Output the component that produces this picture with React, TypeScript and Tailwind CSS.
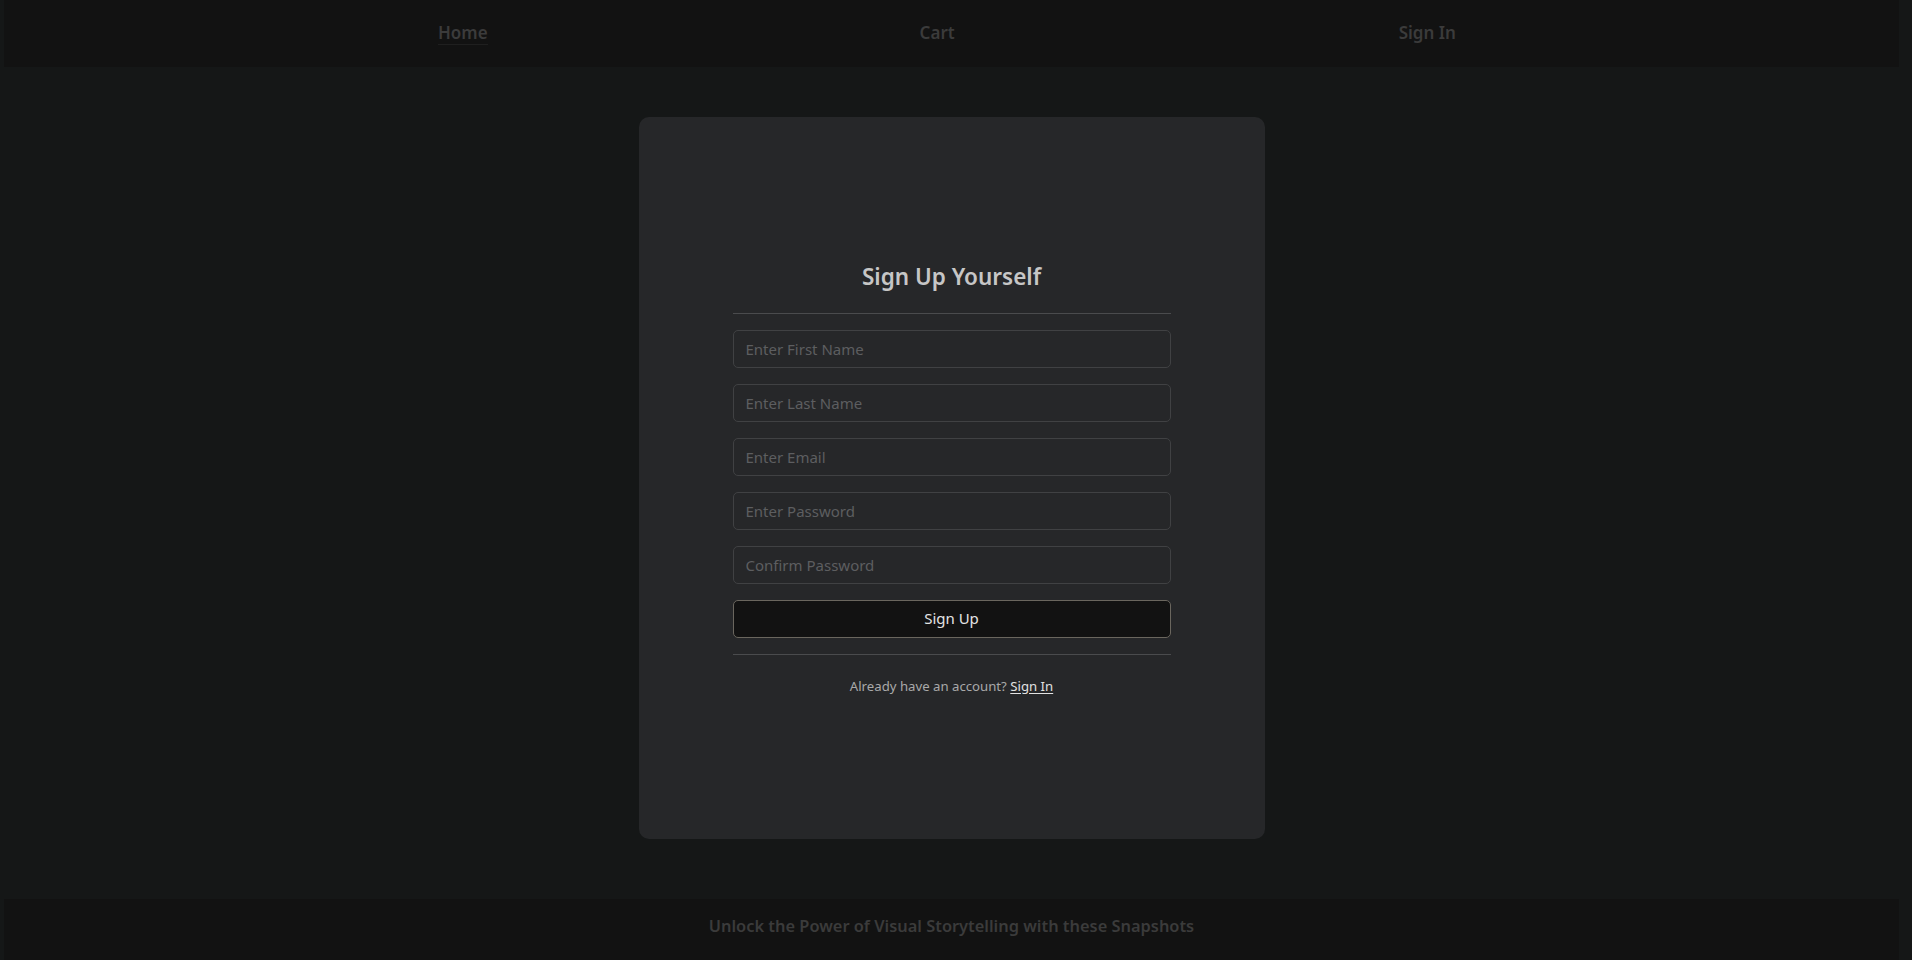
import React from "react";

export default function App() {
  const font = { fontFamily: '"Noto Sans", "Open Sans", sans-serif' };
  const inputs = [
    "Enter First Name",
    "Enter Last Name",
    "Enter Email",
    "Enter Password",
    "Confirm Password",
  ];
  return (
    <div className="h-[960px] w-full bg-[#151717] overflow-hidden" style={font}>
      <div className="ml-[4px] w-[1895px] flex flex-col h-[960px]">
        <nav className="h-[67px] shrink-0 bg-[#121212] flex items-center">
          <div className="flex items-center pb-[1px] text-[17px] font-semibold text-[#3b3b3b] whitespace-nowrap">
            <a className="ml-[434px] border-b border-[#1f1f1f] leading-[22px]">Home</a>
            <a className="ml-[432px] border-b border-transparent leading-[22px]">Cart</a>
            <a className="ml-[444px] border-b border-transparent leading-[22px]">Sign In</a>
          </div>
        </nav>
        <main className="flex-1 flex justify-center pt-[50px] pb-[60px]">
          <div className="w-[626px] h-[722px] rounded-[10px] bg-[#262729] flex flex-col items-center justify-center">
            <div className="w-[438px] flex flex-col pb-[2px]">
              <h1 className="pt-[3px] text-center text-[22.5px] leading-[30px] font-semibold text-[#c6c6c6]">
                Sign Up Yourself
              </h1>
              <div className="mt-[21px] h-px bg-[#4a4b4d]" />
              <div className="mt-[16px] flex flex-col gap-[16px]">
                {inputs.map((p) => (
                  <input
                    key={p}
                    placeholder={p}
                    className="h-[38px] rounded-[5px] border border-[#404143] bg-transparent px-[12px] text-[15px] text-[#cfcfcf] placeholder:text-[#5d5e60] outline-none"
                    style={font}
                  />
                ))}
                <button
                  className="h-[38px] rounded-[5px] border border-[#6a665e] bg-[#121212] text-[15px] text-[#e4e4e4]"
                  style={font}
                >
                  Sign Up
                </button>
              </div>
              <div className="mt-[16px] h-px bg-[#4a4b4d]" />
              <p className="mt-[21px] text-center text-[13.2px] leading-[20px] text-[#a9a9a9]">
                Already have an account?{" "}
                <a className="text-[#e2e2e2] underline underline-offset-2">Sign In</a>
              </p>
            </div>
          </div>
        </main>
        <footer className="h-[61px] shrink-0 bg-[#121212] flex items-start justify-center pt-[15px]">
          <p className="text-[16.4px] leading-[24px] font-semibold text-[#3b3b3b] whitespace-nowrap">
            Unlock the Power of Visual Storytelling with these Snapshots
          </p>
        </footer>
      </div>
    </div>
  );
}
